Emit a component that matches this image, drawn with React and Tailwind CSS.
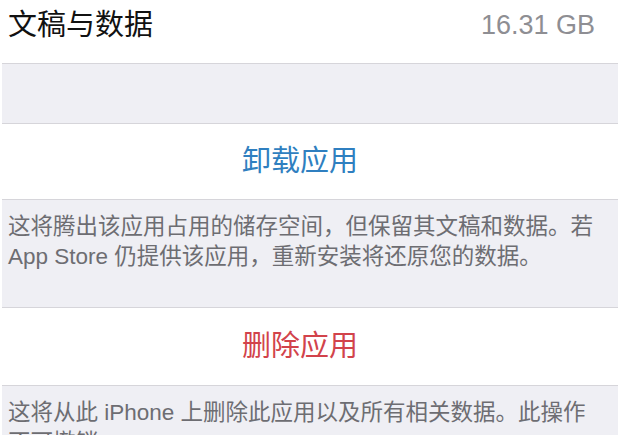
import React from "react";

const FONT = {
  fontFamily: '"Liberation Sans", "Noto Sans CJK SC", sans-serif',
};

const Footer = ({ children }) => (
  <div className="border-y border-[#d6d5da] bg-[#efeff4] px-[6px] pt-[12px] text-[22.5px] leading-[30px] text-[#6d6d72]">
    {children}
  </div>
);

const ActionRow = ({ label, color, height }) => (
  <div className={`flex items-center justify-center bg-white pr-[20px] ${height}`}>
    <span className={`text-[29px] leading-none ${color}`}>{label}</span>
  </div>
);

export default function App() {
  return (
    <div className="h-[435px] w-[625px] overflow-hidden bg-white" style={FONT}>
      <div className="pl-[2px] pr-[7px]">
        <div className="flex h-[63px] items-start justify-between pl-[6px] pr-[23px] pt-[7px]">
          <span className="text-[29px] leading-[36px] text-[#111111]">文稿与数据</span>
          <span className="text-[27px] leading-[36px] text-[#8e8e93]">16.31 GB</span>
        </div>

        <div className="h-[61px] border-y border-[#d6d5da] bg-[#efeff4]" />

        <ActionRow label="卸载应用" color="text-[#2f7fc0]" height="h-[75px]" />

        <Footer>
          <div className="h-[95px]">
            这将腾出该应用占用的储存空间，但保留其文稿和数据。若
            <br />
            App Store 仍提供该应用，重新安装将还原您的数据。
          </div>
        </Footer>

        <ActionRow label="删除应用" color="text-[#d2434b]" height="h-[77px]" />

        <Footer>
          这将从此 iPhone 上删除此应用以及所有相关数据。此操作
          <br />
          不可撤销。
        </Footer>
      </div>
    </div>
  );
}
